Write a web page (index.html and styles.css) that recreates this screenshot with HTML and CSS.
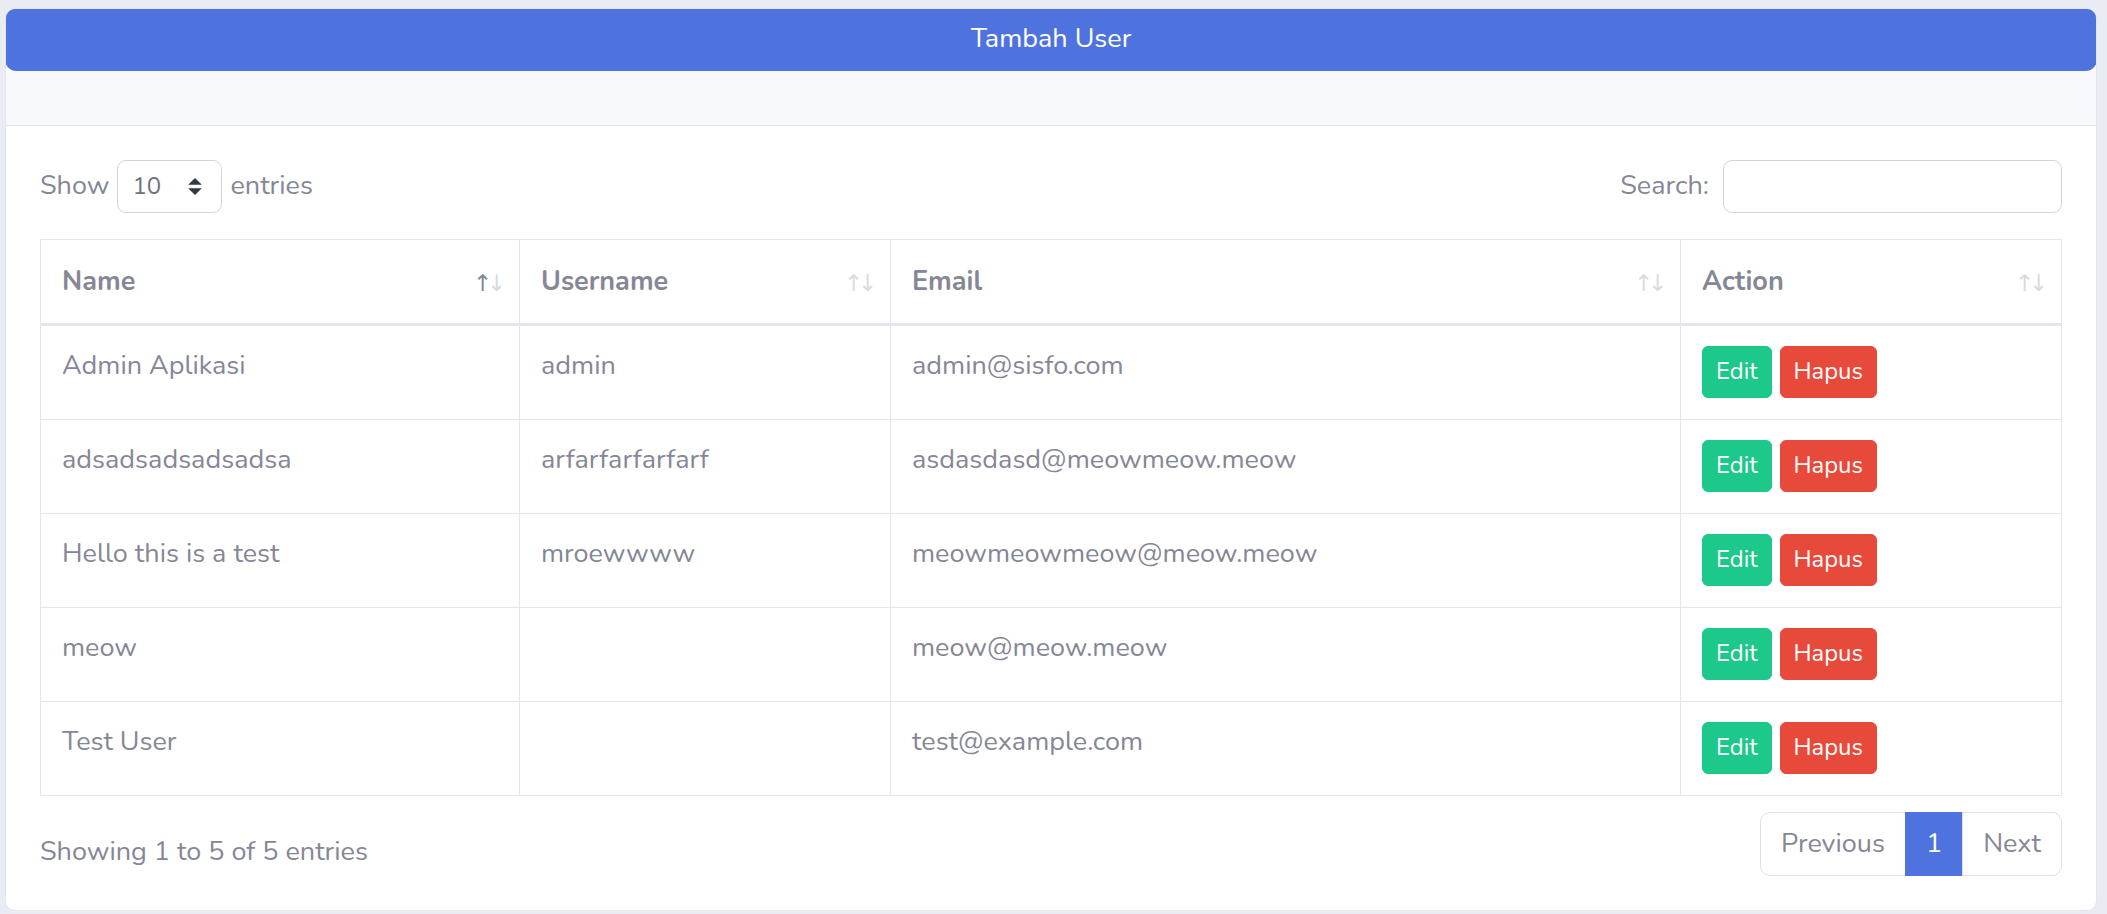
FILE: index.html
```html
<!DOCTYPE html>
<html lang="en">
<head>
    <meta charset="UTF-8">
    <meta name="viewport" content="width=device-width, initial-scale=1.0">
    <title>Data User</title>
    <link rel="stylesheet" href="styles.css">
</head>
<body>
    <div class="wrapper">
        <div class="card">
            <a href="#" class="btn-add">Tambah User</a>
            <div class="card-header"></div>
            <div class="card-body">
                <div class="table-top">
                    <label class="length">
                        Show
                        <span class="select-wrap">
                            <select class="length-select">
                                <option>10</option>
                                <option>25</option>
                                <option>50</option>
                                <option>100</option>
                            </select>
                            <svg class="select-arrow" viewBox="0 0 4 5" width="14" height="17">
                                <path d="M2 0L0 2h4zm0 5L0 3h4z" fill="#343a40"/>
                            </svg>
                        </span>
                        entries
                    </label>
                    <label class="search">
                        Search:
                        <input type="search" class="search-input">
                    </label>
                </div>

                <table class="data-table">
                    <colgroup>
                        <col class="col-name">
                        <col class="col-username">
                        <col class="col-email">
                        <col class="col-action">
                    </colgroup>
                    <thead>
                        <tr>
                            <th class="sorting sorting-asc">Name</th>
                            <th class="sorting">Username</th>
                            <th class="sorting">Email</th>
                            <th class="sorting">Action</th>
                        </tr>
                    </thead>
                    <tbody>
                        <tr>
                            <td>Admin Aplikasi</td>
                            <td>admin</td>
                            <td>admin@sisfo.com</td>
                            <td>
                                <div class="actions">
                                    <a href="#" class="btn btn-edit">Edit</a>
                                    <a href="#" class="btn btn-delete">Hapus</a>
                                </div>
                            </td>
                        </tr>
                        <tr>
                            <td>adsadsadsadsadsa</td>
                            <td>arfarfarfarfarf</td>
                            <td>asdasdasd@meowmeow.meow</td>
                            <td>
                                <div class="actions">
                                    <a href="#" class="btn btn-edit">Edit</a>
                                    <a href="#" class="btn btn-delete">Hapus</a>
                                </div>
                            </td>
                        </tr>
                        <tr>
                            <td>Hello this is a test</td>
                            <td>mroewwww</td>
                            <td>meowmeowmeow@meow.meow</td>
                            <td>
                                <div class="actions">
                                    <a href="#" class="btn btn-edit">Edit</a>
                                    <a href="#" class="btn btn-delete">Hapus</a>
                                </div>
                            </td>
                        </tr>
                        <tr>
                            <td>meow</td>
                            <td></td>
                            <td>meow@meow.meow</td>
                            <td>
                                <div class="actions">
                                    <a href="#" class="btn btn-edit">Edit</a>
                                    <a href="#" class="btn btn-delete">Hapus</a>
                                </div>
                            </td>
                        </tr>
                        <tr>
                            <td>Test User</td>
                            <td></td>
                            <td>test@example.com</td>
                            <td>
                                <div class="actions">
                                    <a href="#" class="btn btn-edit">Edit</a>
                                    <a href="#" class="btn btn-delete">Hapus</a>
                                </div>
                            </td>
                        </tr>
                    </tbody>
                </table>

                <div class="table-bottom">
                    <div class="info">Showing 1 to 5 of 5 entries</div>
                    <ul class="pagination">
                        <li class="page-item disabled"><a href="#" class="page-link">Previous</a></li>
                        <li class="page-item active"><a href="#" class="page-link">1</a></li>
                        <li class="page-item disabled"><a href="#" class="page-link">Next</a></li>
                    </ul>
                </div>
            </div>
        </div>
    </div>
</body>
</html>
```

FILE: styles.css
```css
body {
    margin: 0;
    background-color: #eaecf4;
    font-family: "Nunito", "Open Sans", sans-serif;
    font-size: 27px;
    line-height: 1.5;
    color: #858796;
}

.wrapper {
    padding: 8px 10px 4px 5px;
}

.card {
    background: #fff;
    border: 1px solid #e3e6f0;
    border-radius: 10px;
    overflow: hidden;
}

.btn-add {
    display: block;
    margin: -1px -1px 0 -1px;
    padding: 10px 20px;
    border: 1px solid #4e73df;
    border-radius: 11px;
    background: #4e73df;
    color: #fff;
    text-align: center;
    text-decoration: none;
}

.card-header {
    height: 54px;
    background: #f8f9fc;
    border-bottom: 1px solid #e3e6f0;
}

.card-body {
    padding: 34px;
}

/* length + search row */
.table-top {
    display: flex;
    justify-content: space-between;
    align-items: center;
    height: 53px;
}

.length, .search {
    display: flex;
    align-items: center;
    gap: 8px;
}

.select-wrap {
    position: relative;
    display: inline-block;
}

.length-select {
    appearance: none;
    -webkit-appearance: none;
    width: 105px;
    height: 53px;
    padding: 0 48px 0 14px;
    border: 1px solid #d1d3e2;
    border-radius: 9px;
    background: #fff;
    font-family: inherit;
    font-size: 24px;
    color: #6e707e;
}

.select-arrow {
    position: absolute;
    right: 20px;
    top: 18px;
    pointer-events: none;
}

.search-input {
    width: 339px;
    height: 53px;
    box-sizing: border-box;
    margin-left: 6px;
    border: 1px solid #d1d3e2;
    border-radius: 9px;
    font-size: 24px;
}

/* table */
.data-table {
    width: 100%;
    margin-top: 26px;
    border-collapse: collapse;
    table-layout: fixed;
}

.col-name { width: 479px; }
.col-username { width: 371px; }
.col-email { width: 790px; }

.data-table th,
.data-table td {
    border: 1px solid #e3e6f0;
    padding: 20px 20px 21px 21px;
    text-align: left;
    vertical-align: top;
}

.data-table th {
    position: relative;
    padding-top: 22px;
    padding-bottom: 21px;
    padding-right: 51px;
    vertical-align: bottom;
    border-bottom: 3px solid #e3e6f0;
    font-weight: 700;
}

.data-table td {
    height: 52px;
}

.sorting:before,
.sorting:after {
    position: absolute;
    bottom: 23px;
    font-weight: 400;
    font-family: "DejaVu Sans", sans-serif;
    font-size: 23px;
    opacity: 0.3;
}

.sorting:before {
    content: "\2191";
    right: 27px;
}

.sorting:after {
    content: "\2193";
    right: 13px;
}

.sorting-asc:before {
    opacity: 1;
}

.actions {
    display: flex;
    gap: 8px;
}

.btn {
    display: inline-block;
    padding: 7px 13px;
    border: 1px solid transparent;
    border-radius: 6px;
    font-size: 23.8px;
    line-height: 1.5;
    color: #fff;
    text-decoration: none;
}

.btn-edit {
    background: #1cc88a;
    border-color: #1cc88a;
}

.btn-delete {
    background: #e74a3b;
    border-color: #e74a3b;
}

/* info + paging row */
.table-bottom {
    display: flex;
    justify-content: space-between;
    align-items: flex-start;
    margin-top: 16px;
}

.info {
    padding-top: 20px;
    white-space: nowrap;
}

.pagination {
    display: flex;
    list-style: none;
    margin: 0;
    padding: 0;
}

.page-link {
    display: block;
    padding: 14px 20px;
    margin-left: -1px;
    line-height: 1.25;
    border: 1px solid #dddfeb;
    background: #fff;
    color: #858796;
    text-decoration: none;
}

.page-item:first-child .page-link {
    margin-left: 0;
    border-radius: 10px 0 0 10px;
}

.page-item:last-child .page-link {
    border-radius: 0 10px 10px 0;
}

.page-item.active .page-link {
    background: #4e73df;
    border-color: #4e73df;
    color: #fff;
}
```
